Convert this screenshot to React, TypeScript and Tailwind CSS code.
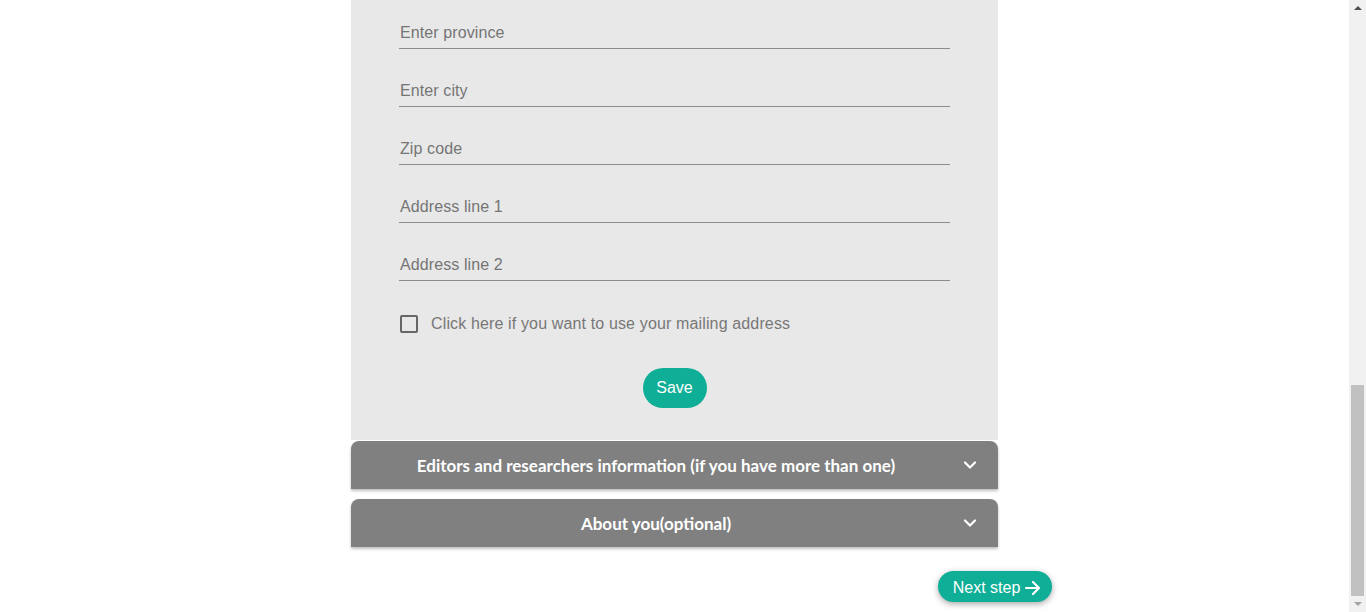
import React from "react";

const fields = ["Enter province", "Enter city", "Zip code", "Address line 1", "Address line 2"];

function Chevron() {
  return (
    <svg width="14" height="10" viewBox="0 0 14 10" className="shrink-0">
      <path d="M2 2.5 L7 7.5 L12 2.5" fill="none" stroke="white" strokeWidth="2.2" strokeLinecap="round" strokeLinejoin="round" />
    </svg>
  );
}

function AccHeader({ title }: { title: string }) {
  return (
    <div className="relative flex h-[48px] items-center justify-center rounded-t-[8px] bg-[#808080] pt-[2px] shadow-[0_2px_3px_rgba(0,0,0,0.25)]">
      <span className="pr-[37px] text-[17px] font-bold text-white" style={{ fontFamily: "Lato, 'Liberation Sans', sans-serif" }}>
        {title}
      </span>
      <span className="absolute right-[21px] top-[19px]">
        <Chevron />
      </span>
    </div>
  );
}

export default function App() {
  return (
    <div className="flex h-[612px] w-[1366px] overflow-hidden bg-white" style={{ fontFamily: "'Liberation Sans', Arial, sans-serif" }}>
      <div className="flex-1">
        <div className="mx-auto flex w-[647px] flex-col">
          <div className="flex flex-col bg-[#e8e8e8] px-[48px] pb-[32px] pt-[16px]">
            <div className="flex flex-col gap-[25px]">
              {fields.map((f) => (
                <div key={f} className="flex h-[33px] items-center border-b border-[#8c8c8c] pl-[1px] pt-[2px] text-[16px] tracking-[0.1px] text-[#757575]">
                  {f}
                </div>
              ))}
            </div>
            <label className="mt-[34px] flex h-[18px] items-center gap-[13px] pl-[1px]">
              <span className="h-[18px] w-[18px] shrink-0 rounded-[2px] border-2 border-[#666666]" />
              <span className="text-[16px] tracking-[0.14px] text-[#777777]">Click here if you want to use your mailing address</span>
            </label>
            <div className="mt-[35px] flex justify-center">
              <button className="h-[40px] w-[64px] rounded-full bg-[#0fae96] text-[16px] text-white">Save</button>
            </div>
          </div>
          <div className="mt-[1px] flex flex-col gap-[10px]">
            <AccHeader title="Editors and researchers information (if you have more than one)" />
            <AccHeader title="About you(optional)" />
          </div>
          <div className="mr-[-54px] mt-[24px] flex justify-end">
            <button className="flex h-[31px] w-[114px] items-center justify-center gap-[4px] rounded-full bg-[#0fae96] pl-[5px] pt-[2px] text-[16px] text-white shadow-[0_2px_6px_rgba(0,0,0,0.35)]">
              <span>Next step</span>
              <svg width="18" height="16" viewBox="0 0 18 16">
                <path d="M2 8 H15 M9 2 L15 8 L9 14" fill="none" stroke="white" strokeWidth="2.2" strokeLinecap="round" strokeLinejoin="round" />
              </svg>
            </button>
          </div>
        </div>
      </div>
      <div className="flex h-[612px] w-[17px] flex-col bg-[#f1f1f1]">
        <div className="flex h-[17px] items-center justify-center">
          <div className="h-0 w-0 border-x-[4px] border-b-[4px] border-x-transparent border-b-[#505050]" />
        </div>
        <div className="flex-1 px-[2px] pt-[368px]">
          <div className="h-[211px] bg-[#c1c1c1]" />
        </div>
        <div className="flex h-[17px] items-center justify-center">
          <div className="h-0 w-0 border-x-[4px] border-t-[4px] border-x-transparent border-t-[#a3a3a3]" />
        </div>
      </div>
    </div>
  );
}
